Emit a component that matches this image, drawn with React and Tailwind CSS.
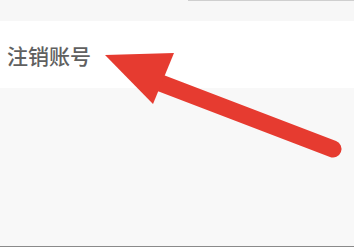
import React from "react";

export default function App() {
  return (
    <div className="relative w-[354px] h-[247px] overflow-hidden bg-[#f8f8f8]" style={{ fontFamily: '"Noto Sans CJK SC", "Noto Sans", sans-serif' }}>
      <div className="h-[21px] bg-[#f7f7f7] flex justify-end">
        <div className="w-[166px] h-[2px] border-t border-[#cfcfcf]" />
      </div>
      <div className="h-[67px] bg-white flex items-center pl-[7px]">
        <span className="text-[21px] leading-none text-[#606060] font-medium pt-[1px]">注销账号</span>
      </div>
      <div className="h-[158px] bg-[#f8f8f8]" />
      <div className="h-px bg-[#8a8a8a]" />
      <svg className="absolute left-0 top-0" width="354" height="247" viewBox="0 0 354 247">
        <line x1="150" y1="79" x2="333" y2="149" stroke="#e63b30" strokeWidth="17" strokeLinecap="round" />
        <polygon points="105,55 174,53 153,104" fill="#e63b30" />
      </svg>
    </div>
  );
}
